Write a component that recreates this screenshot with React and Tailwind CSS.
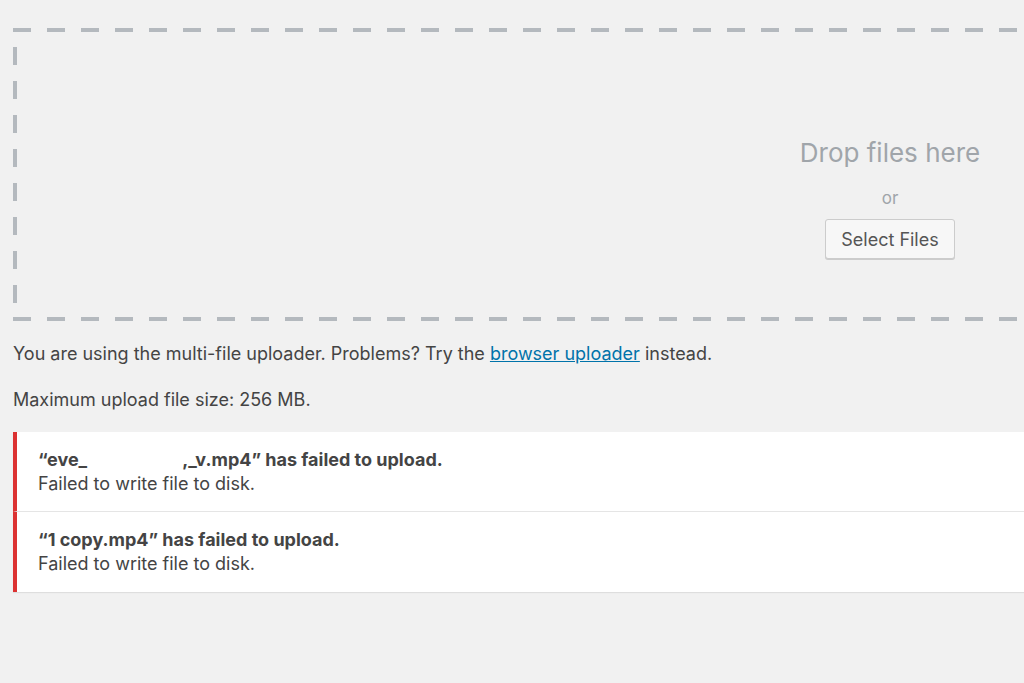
export default function App() {
    return (
        <div className="min-h-[683px] w-full overflow-hidden bg-[#f1f1f1] font-['Inter','Liberation_Sans',sans-serif] text-[#444]">
            {/* Drop zone with long dashed edges */}
            <div className="ml-[13px] mt-[28px] h-[293px] w-[1754px] bg-[linear-gradient(to_right,#b4b9be_52%,transparent_52%),linear-gradient(to_right,#b4b9be_52%,transparent_52%),linear-gradient(to_bottom,#b4b9be_52%,transparent_52%)] bg-[length:34px_4px,34px_4px,4px_34px] bg-[position:0_0,0_100%,0_-15px] [background-repeat:repeat-x,repeat-x,repeat-y]">
                <div className="flex flex-col items-center pt-[109px]">
                    <p className="text-[26px] leading-[32px] text-[#a0a5aa]">Drop files here</p>
                    <p className="mt-[17px] text-[17px] leading-[24px] text-[#a0a5aa]">or</p>
                    <button className="mt-[9px] h-[40px] rounded-[3px] border border-[#ccc] bg-[#f7f7f7] px-[15px] text-[18px] text-[#555] shadow-[0_1px_0_#ccc]">
                        Select Files
                    </button>
                </div>
            </div>

            <p className="ml-[13px] mt-[21px] text-[18px] leading-[24px]">
                You are using the multi-file uploader. Problems? Try the{' '}
                <a href="#" className="text-[#0073aa] underline">browser uploader</a> instead.
            </p>
            <p className="ml-[13px] mt-[22px] text-[18px] leading-[24px]">Maximum upload file size: 256 MB.</p>

            {/* Upload errors */}
            <div className="ml-[13px] mt-[20px] w-[1100px] shadow-[0_1px_1px_rgba(0,0,0,0.08)]">
                <div className="h-[80px] border-b border-[#e5e5e5] border-l-4 border-l-[#dc3232] bg-white pl-[21px] pt-[16px] text-[18px] leading-[24px]">
                    <p className="font-bold">
                        “eve_<span className="inline-block w-[95px]"></span>,_v.mp4” has failed to upload.
                    </p>
                    <p>Failed to write file to disk.</p>
                </div>
                <div className="h-[80px] border-l-4 border-l-[#dc3232] bg-white pl-[21px] pt-[16px] text-[18px] leading-[24px]">
                    <p className="font-bold">“1 copy.mp4” has failed to upload.</p>
                    <p>Failed to write file to disk.</p>
                </div>
            </div>
        </div>
    );
}
